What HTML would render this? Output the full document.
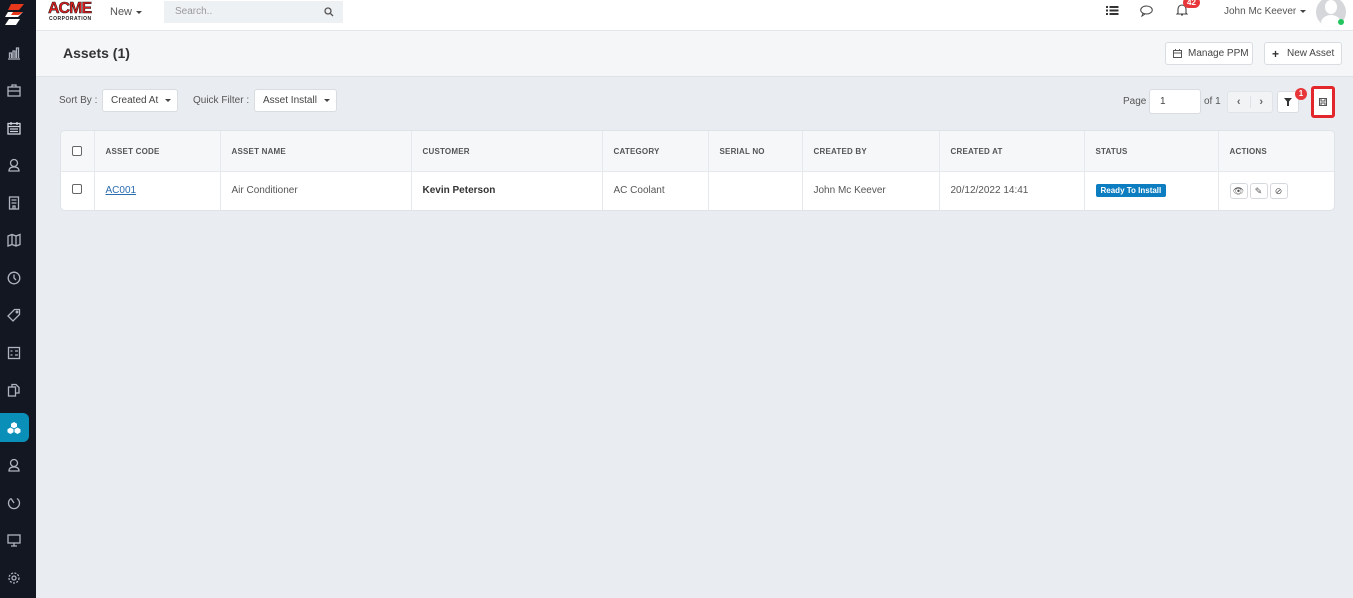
<!DOCTYPE html>
<html><head><meta charset="utf-8"><style>
*{box-sizing:border-box;margin:0;padding:0}
body{width:1353px;height:598px;overflow:hidden;background:#e9edf1;font-family:"Liberation Sans",sans-serif;position:relative;color:#333}
.abs{position:absolute}
#side{left:0;top:0;width:36px;height:598px;background:#131722}
.si{position:absolute;left:7px;width:14px;height:14px}
#top{left:36px;top:0;width:1317px;height:31px;background:#fff;border-bottom:1px solid #e3e6ea}
#hdr{left:36px;top:31px;width:1317px;height:46px;background:#f4f6f8;border-bottom:1px solid #dde2e7}
.btn{position:absolute;background:#fff;border:1px solid #d9dde2;border-radius:3px;font-size:10px;color:#444;display:flex;align-items:center}
.caret{display:inline-block;border-left:3px solid transparent;border-right:3px solid transparent;border-top:3px solid #444;margin-left:7px}
#card{left:60px;top:130px;width:1275px;height:81px;background:#fff;border:1px solid #dfe3e8;border-radius:5px;overflow:hidden}
table{border-collapse:collapse;width:100%;font-size:10px}
th{height:40px;background:#f5f7f9;text-align:left;font-size:8px;font-weight:bold;color:#555;padding-left:11px;padding-top:2px;border-right:1px solid #e5e8ec;border-bottom:1px solid #e5e8ec;letter-spacing:.2px}
td{height:39px;padding-left:11px;border-right:1px solid #e5e8ec;color:#555}
th:last-child,td:last-child{border-right:none}
.cb{display:inline-block;width:10px;height:10px;border:1px solid #666;border-radius:2px;background:#fff}
.ab{display:inline-block;width:18px;height:16px;border:1px solid #d5d9de;border-radius:3px;margin-right:2px;vertical-align:middle;text-align:center;font-size:9px;line-height:14px;background:#fff}
</style></head><body>
<div id="side" class="abs">
<svg class="abs" style="left:5px;top:4px" width="20" height="22" viewBox="0 0 20 22"><polygon points="6,0 19,0 14,6 3,6" fill="#e8381c"/><polygon points="3,8 18,8 13,13 0,13" fill="#fff"/><polygon points="8,8 18,8 14,11 6,11" fill="#e8381c"/><polygon points="4,15 15,15 11,21 0,21" fill="#fff"/></svg>
<svg class="si" style="top:46px" viewBox="0 0 14 14" fill="none" stroke="#aeb4bf" stroke-width="1.3"><path d="M1 13h12M2.5 12V7h2v5M6 12V5h2v7M9.5 12V2h2v10"/></svg>
<svg class="si" style="top:83px" viewBox="0 0 14 14" fill="none" stroke="#aeb4bf" stroke-width="1.3"><rect x="1" y="4" width="12" height="9"/><path d="M5 4V2h4v2M1 8h12"/></svg>
<svg class="si" style="top:121px" viewBox="0 0 14 14" fill="none" stroke="#cfd3da" stroke-width="1.3"><rect x="1" y="2.5" width="12" height="10.5"/><path d="M1 5.5h12M4 1v3M10 1v3M3 8h8M3 10.5h8"/></svg>
<svg class="si" style="top:158px" viewBox="0 0 14 14" fill="none" stroke="#aeb4bf" stroke-width="1.3"><circle cx="7" cy="5" r="3.5"/><path d="M2 13c0-3 2-4 5-4s5 1 5 4z"/></svg>
<svg class="si" style="top:196px" viewBox="0 0 14 14" fill="none" stroke="#aeb4bf" stroke-width="1.3"><rect x="2.5" y="1" width="9" height="12"/><path d="M4.5 4h5M4.5 7h5M6 13v-3h2v3"/></svg>
<svg class="si" style="top:233px" viewBox="0 0 14 14" fill="none" stroke="#aeb4bf" stroke-width="1.3"><path d="M1 3l4-1.5 4 1.5 4-1.5v10l-4 1.5-4-1.5-4 1.5zM5 1.5v10M9 3v10"/></svg>
<svg class="si" style="top:271px" viewBox="0 0 14 14" fill="none" stroke="#aeb4bf" stroke-width="1.3"><circle cx="7" cy="7" r="5.8"/><path d="M7 3.5V7l2 2"/></svg>
<svg class="si" style="top:308px" viewBox="0 0 14 14" fill="none" stroke="#aeb4bf" stroke-width="1.3"><path d="M7.5 1.5h5v5l-6.5 6.5-5-5z"/><circle cx="10" cy="4" r=".8"/></svg>
<svg class="si" style="top:346px" viewBox="0 0 14 14" fill="none" stroke="#aeb4bf" stroke-width="1.3"><rect x="1.5" y="1.5" width="11" height="11"/><path d="M3.5 5h2M8 5h3M3.5 9h2M8 9h3"/></svg>
<svg class="si" style="top:383px" viewBox="0 0 14 14" fill="none" stroke="#aeb4bf" stroke-width="1.3"><rect x="1.5" y="4" width="7" height="9"/><path d="M5 4V1.5h4l3 3V10H8.5"/></svg>
<div class="abs" style="left:0;top:413px;width:29px;height:29px;background:#0a8fb8;border-radius:0 6px 6px 0"></div>
<svg class="si" style="top:421px" viewBox="0 0 14 14" fill="#fff"><path d="M7 1l3 1.7v3L7 7.4 4 5.7v-3z"/><path d="M3.5 6.5l3 1.7v3L3.5 13 .5 11.2v-3z"/><path d="M10.5 6.5l3 1.7v3l-3 1.8-3-1.8v-3z"/></svg>
<svg class="si" style="top:458px" viewBox="0 0 14 14" fill="none" stroke="#aeb4bf" stroke-width="1.3"><circle cx="7" cy="5" r="3.5"/><path d="M2 13c0-3 2-4 5-4s5 1 5 4z"/></svg>
<svg class="si" style="top:496px" viewBox="0 0 14 14" fill="none" stroke="#aeb4bf" stroke-width="1.3"><path d="M4 2.5A5.5 5.5 0 1 0 10 2.5M4 2.5L7 7"/></svg>
<svg class="si" style="top:533px" viewBox="0 0 14 14" fill="none" stroke="#aeb4bf" stroke-width="1.3"><rect x="1" y="2" width="12" height="8"/><path d="M7 10v3M4 13h6"/></svg>
<svg class="si" style="top:571px" viewBox="0 0 14 14" fill="none" stroke="#aeb4bf" stroke-width="1.3"><circle cx="7" cy="7" r="2"/><circle cx="7" cy="7" r="5" stroke-dasharray="2 1.4"/></svg>
</div>
<div id="top" class="abs">
<div class="abs" style="left:12px;top:1px;font:900 16px 'Liberation Sans',sans-serif;color:#e01b1b;letter-spacing:-1px;line-height:16px;-webkit-text-stroke:0.5px #222">ACME</div>
<div class="abs" style="left:13px;top:16px;font:bold 5px 'Liberation Sans',sans-serif;color:#222;letter-spacing:.5px">CORPORATION</div>
<div class="abs" style="left:74px;top:6px;font-size:11px;color:#555">New<span class="caret" style="margin-left:4px;vertical-align:middle"></span></div>
<div class="abs" style="left:128px;top:1px;width:179px;height:22px;background:#eef1f4;font-size:10px;color:#999;padding:5px 11px">Search..</div>
<svg class="abs" style="left:288px;top:7px" width="10" height="10" viewBox="0 0 10 10" fill="none" stroke="#555" stroke-width="1.3"><circle cx="4" cy="4" r="3"/><path d="M6.5 6.5L9 9"/></svg>
<svg class="abs" style="left:1070px;top:5px" width="13" height="11" viewBox="0 0 13 11" fill="#333"><rect x="0" y="1" width="2" height="2"/><rect x="3.5" y="1" width="9" height="2"/><rect x="0" y="4.5" width="2" height="2"/><rect x="3.5" y="4.5" width="9" height="2"/><rect x="0" y="8" width="2" height="2"/><rect x="3.5" y="8" width="9" height="2"/></svg>
<svg class="abs" style="left:1104px;top:5px" width="13" height="12" viewBox="0 0 13 12" fill="none" stroke="#444" stroke-width="1"><ellipse cx="6.5" cy="5" rx="5.8" ry="4"/><path d="M3 8.5L2 11l3-2"/></svg>
<svg class="abs" style="left:1140px;top:3px" width="12" height="13" viewBox="0 0 12 13" fill="none" stroke="#444" stroke-width="1.1"><path d="M2 10V6a4 4 0 0 1 8 0v4l1 1H1zM5 12h2"/></svg>
<div class="abs" style="left:1147px;top:-3px;background:#e8373a;color:#fff;font:bold 8px 'Liberation Sans',sans-serif;border-radius:7px;padding:1px 4px">42</div>
<div class="abs" style="left:1188px;top:6px;font-size:10px;color:#555">John Mc Keever<span class="caret" style="margin-left:4px;vertical-align:middle"></span></div>
<div class="abs" style="left:1280px;top:-3px;width:30px;height:30px;border-radius:50%;background:#d5d7da;overflow:hidden"><div style="position:absolute;left:9px;top:3px;width:12px;height:14px;border-radius:50%;background:#fff"></div><div style="position:absolute;left:5px;top:18px;width:20px;height:16px;border-radius:50%;background:#fff"></div></div>
<div class="abs" style="left:1302px;top:19px;width:6px;height:6px;border-radius:50%;background:#22c55e"></div>
</div>
<div id="hdr" class="abs">
<div class="abs" style="left:27px;top:14px;font-size:14px;font-weight:bold;color:#333">Assets (1)</div>
<div class="btn" style="left:1129px;top:11px;width:88px;height:23px;padding-left:7px"><svg width="9" height="9" viewBox="0 0 9 9" fill="none" stroke="#555"><rect x=".5" y="1.5" width="8" height="7"/><path d="M.5 4h8M2.5 0v2M6.5 0v2"/></svg><span style="margin-left:6px">Manage PPM</span></div>
<div class="btn" style="left:1228px;top:11px;width:78px;height:23px;padding-left:7px"><b style="font-size:12px;color:#333">+</b><span style="margin-left:8px">New Asset</span></div>
</div>
<div class="abs" style="left:59px;top:95px;font-size:10px;color:#555">Sort By :</div>
<div class="btn" style="left:102px;top:89px;width:76px;height:23px;padding-left:8px">Created At<span class="caret"></span></div>
<div class="abs" style="left:193px;top:95px;font-size:10px;color:#555">Quick Filter :</div>
<div class="btn" style="left:254px;top:89px;width:83px;height:23px;padding-left:8px">Asset Install<span class="caret"></span></div>
<div class="abs" style="left:1123px;top:96px;font-size:10px;color:#555">Page</div>
<div class="btn" style="left:1149px;top:89px;width:52px;height:25px;padding-left:10px">1</div>
<div class="abs" style="left:1204px;top:96px;font-size:10px;color:#555">of 1</div>
<div class="btn" style="left:1227px;top:91px;width:46px;height:22px;background:#f1f3f5;border-color:#e0e3e7"><span style="width:23px;text-align:center;border-right:1px solid #dfe2e6;font-size:11px;font-weight:bold;color:#666">&#8249;</span><span style="width:22px;text-align:center;font-size:11px;font-weight:bold;color:#666">&#8250;</span></div>
<div class="btn" style="left:1277px;top:91px;width:22px;height:22px;justify-content:center"><svg width="8" height="8" viewBox="0 0 8 8" fill="#333"><path d="M0 0h8L5 3.5V8H3V3.5z"/></svg></div>
<div class="abs" style="left:1295px;top:88px;width:12px;height:12px;border-radius:50%;background:#e8373a;color:#fff;font:bold 8px 'Liberation Sans',sans-serif;text-align:center;line-height:12px">1</div>
<div class="abs" style="left:1311px;top:86px;width:24px;height:32px;border:3px solid #e3262c;border-radius:3px;background:#fff"><svg style="position:absolute;left:5px;top:9px" width="8" height="8" viewBox="0 0 8 8" fill="none" stroke="#555"><rect x=".5" y=".5" width="7" height="7"/><path d="M2 .5v2.5h4V.5M2 7.5V5h4v2.5"/></svg></div>
<div id="card" class="abs">
<table><colgroup><col style="width:33px"><col style="width:126px"><col style="width:191px"><col style="width:191px"><col style="width:106px"><col style="width:94px"><col style="width:137px"><col style="width:145px"><col style="width:134px"><col></colgroup>
<tr><th><span class="cb"></span></th><th>ASSET CODE</th><th>ASSET NAME</th><th>CUSTOMER</th><th>CATEGORY</th><th>SERIAL NO</th><th>CREATED BY</th><th>CREATED AT</th><th>STATUS</th><th>ACTIONS</th></tr>
<tr><td><span class="cb"></span></td><td><span style="color:#2b6cb0;text-decoration:underline">AC001</span></td><td>Air Conditioner</td><td><b style="color:#333">Kevin Peterson</b></td><td>AC Coolant</td><td></td><td>John Mc Keever</td><td>20/12/2022 14:41</td><td><span style="background:#0b7dc0;color:#fff;font-size:8px;font-weight:bold;padding:2px 5px;border-radius:2px">Ready To Install</span></td><td><span class="ab">👁</span><span class="ab">✎</span><span class="ab">⊘</span></td></tr>
</table></div>
</body></html>
